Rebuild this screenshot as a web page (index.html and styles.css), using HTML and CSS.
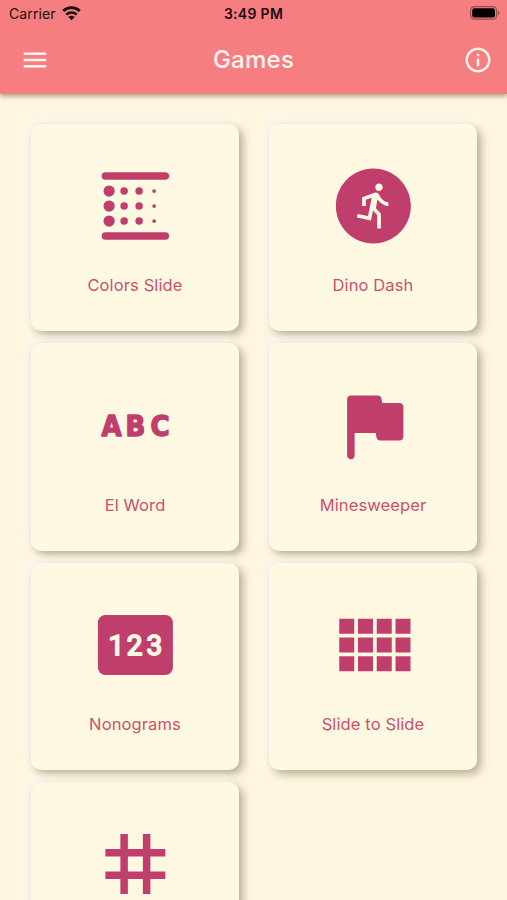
FILE: index.html
```html
<!DOCTYPE html>
<html lang="en">
<head>
<meta charset="utf-8">
<title>Games</title>
<link rel="stylesheet" href="styles.css">
</head>
<body>
<header class="header">
  <div class="status">
    <div class="carrier"><span>Carrier</span>
      <svg class="wifi" viewBox="0 0 18 14"><path d="M1.200 4.700a11.200 11.200 0 0 1 15.600 0" fill="none" stroke="currentColor" stroke-width="2.600"/><path d="M4 8a7.200 7.200 0 0 1 10 0" fill="none" stroke="currentColor" stroke-width="2.300"/><path d="M9 13.400l-3-3.100a4.300 4.300 0 0 1 6 0z" fill="currentColor"/></svg>
    </div>
    <div class="time">3:49 PM</div>
    <svg class="battery" viewBox="0 0 30 14"><rect x=".6" y=".6" width="26" height="12.600" rx="3.800" fill="none" stroke="#000" stroke-opacity=".4" stroke-width="1.200"/><rect x="2.200" y="2.200" width="22.800" height="9.400" rx="2.200"/><path d="M28.100 4.700c1.800.8 1.800 3.600 0 4.400z" opacity=".45"/></svg>
  </div>
  <nav class="toolbar">
    <svg class="tool" viewBox="0 0 24 24"><path d="M3 6h18v2H3zM3 11h18v2H3zM3 16h18v2H3z"/></svg>
    <h1>Games</h1>
    <svg class="tool" viewBox="0 0 24 24"><path d="M11 7h2v2h-2zm0 4h2v6h-2zm1-9C6.480 2 2 6.480 2 12s4.480 10 10 10 10-4.480 10-10S17.520 2 12 2zm0 18c-4.410 0-8-3.590-8-8s3.590-8 8-8 8 3.590 8 8-3.590 8-8 8z"/></svg>
  </nav>
</header>
<main class="grid">
  <article class="card">
    <svg class="icon" viewBox="-.1 0 24 24"><rect x="3" y="3" width="18" height="2" rx="1"/><rect x="3" y="19" width="18" height="2" rx="1"/><circle cx="5" cy="8" r="1.500"/><circle cx="5" cy="12" r="1.500"/><circle cx="5" cy="16" r="1.500"/><circle cx="9" cy="8" r="1"/><circle cx="9" cy="12" r="1"/><circle cx="9" cy="16" r="1"/><circle cx="13" cy="8" r="1"/><circle cx="13" cy="12" r="1"/><circle cx="13" cy="16" r="1"/><circle cx="17" cy="8" r=".5"/><circle cx="17" cy="12" r=".5"/><circle cx="17" cy="16" r=".5"/></svg>
    <span class="label">Colors Slide</span>
  </article>
  <article class="card">
    <svg class="icon" viewBox="-.1 0 24 24"><path d="M12 2C6.480 2 2 6.480 2 12s4.480 10 10 10 10-4.480 10-10S17.520 2 12 2zm1.500 4c.55 0 1 .45 1 1s-.45 1-1 1-1-.45-1-1 .45-1 1-1zm2.500 6c-.7 0-2.010-.54-2.910-1.760l-.41 2.350L14 14.030V18h-1v-3.580l-1.110-1.210-.52 2.640L7.600 15.080l.2-.98 2.780.57.96-4.890-1.540.57V12H9V9.650l3.280-1.210c.49-.18 1.030.06 1.260.53C14.370 10.670 15.590 11 16 11v1z"/></svg>
    <span class="label">Dino Dash</span>
  </article>
  <article class="card">
    <svg class="icon" viewBox="0 0 90 90"><text class="abc" transform="scale(.93 1)" x="12.300 38.300 65" y="56">ABC</text></svg>
    <span class="label">El Word</span>
  </article>
  <article class="card">
    <svg class="icon" viewBox="-.1 -.15 24 24"><path d="M14.400 6l-.24-1.200c-.09-.46-.5-.8-.98-.8H6c-.55 0-1 .45-1 1v15c0 .55.45 1 1 1s1-.45 1-1v-6h5.600l.24 1.200c.09.47.5.8.98.8H19c.55 0 1-.45 1-1V7c0-.55-.45-1-1-1h-4.600z"/></svg>
    <span class="label">Minesweeper</span>
  </article>
  <article class="card">
    <svg class="icon" viewBox="-.4 0 90 90"><rect x="7.500" y="15" width="75" height="60" rx="7.500"/><text class="digits" x="18 36.300 56.200" y="54.800">123</text></svg>
    <span class="label">Nonograms</span>
  </article>
  <article class="card">
    <svg class="icon" viewBox="0 0 24 24"><path d="M3 5h4v4H3zM8 5h4v4H8zM13 5h4v4h-4zM18 5h4v4h-4zM3 10h4v4H3zM8 10h4v4H8zM13 10h4v4h-4zM18 10h4v4h-4zM3 15h4v4H3zM8 15h4v4H8zM13 15h4v4h-4zM18 15h4v4h-4z"/></svg>
    <span class="label">Slide to Slide</span>
  </article>
  <article class="card">
    <svg class="icon" viewBox="-.1 0 24 24"><path d="M8 4h2v16H8zM14 4h2v16h-2zM4 8h16v2H4zM4 14h16v2H4z"/></svg>
  </article>
</main>
</body>
</html>
```
FILE: styles.css
```css
* { box-sizing: border-box; }
body {
  margin: 0;
  height: 900px;
  overflow: hidden;
  background: #fff6e0;
  font-family: Inter, "Liberation Sans", sans-serif;
}
.header {
  position: relative;
  height: 94px;
  background: #f67e81;
  box-shadow: 0 2px 5px rgba(70, 60, 30, .5);
}
.status {
  display: grid;
  grid-template-columns: 1fr auto 1fr;
  align-items: center;
  height: 27px;
  padding: 0 7px 0 9px;
  color: #1b0b0c;
}
.carrier {
  display: flex;
  align-items: center;
  gap: 6px;
  font-size: 14px;
  letter-spacing: .1px;
}
.wifi { width: 19px; height: 15px; margin-top: -1px; }
.time {
  margin-left: -2px;
  font-size: 14px;
  font-weight: 600;
  letter-spacing: .3px;
}
.battery { width: 30px; height: 14px; justify-self: end; margin-top: -1px; }
.toolbar {
  display: grid;
  grid-template-columns: 30px 1fr 30px;
  align-items: center;
  height: 66px;
  padding: 0 14px 0 20px;
  color: #fff4ef;
}
.toolbar h1 {
  margin: 0 6px 0 0;
  font-size: 24px;
  font-weight: 500;
  line-height: 28px;
  letter-spacing: .25px;
  text-align: center;
}
.tool { width: 30px; height: 30px; fill: currentColor; }
.grid {
  display: grid;
  grid-template-columns: 208px 208px;
  grid-auto-rows: 207.300px;
  gap: 12.200px 30px;
  height: 806px;
  overflow: hidden;
  padding: 30px 30px 0 31px;
}
.card {
  display: flex;
  flex-direction: column;
  align-items: center;
  padding-top: 36.900px;
  border-radius: 10px;
  background: #fff8e2;
  box-shadow: 4px 4px 9px rgba(80, 75, 45, .42), -4px -4px 8px #f9f7f0;
}
.icon { width: 90px; height: 90px; fill: #c03e6b; }
.label {
  margin-top: 24.300px;
  color: #c8536c;
  font-size: 16.500px;
  line-height: 20px;
  letter-spacing: .12px;
}
.abc {
  font: bold 28px "DejaVu Sans", sans-serif;
  stroke: #c03e6b;
  stroke-width: 1.500px;
  stroke-linejoin: round;
}
.digits {
  font: 400 28px Roboto, sans-serif;
  fill: #fff8e2;
  stroke: #fff8e2;
  stroke-width: 1.800px;
  stroke-linejoin: round;
}
```
